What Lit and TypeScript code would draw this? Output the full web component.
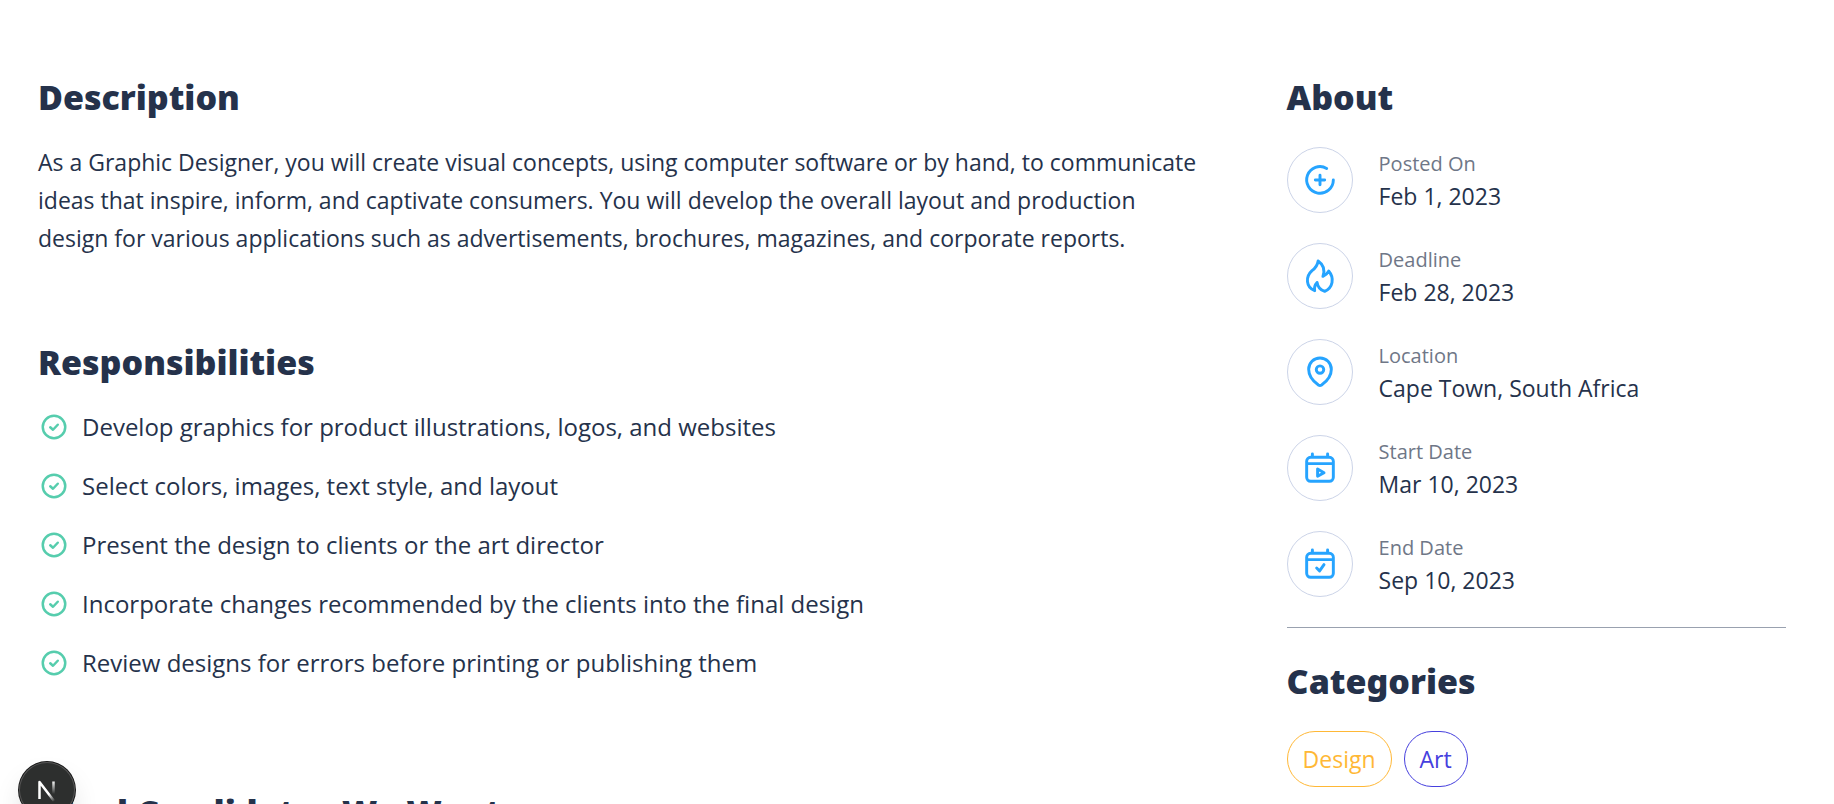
import { LitElement, html, css, svg } from "lit";
import { customElement } from "lit/decorators.js";

const checkIcon = html`<svg class="check" viewBox="0 0 24 24" aria-hidden="true"><circle cx="12" cy="12" r="9"></circle><path d="m9 12.2 2.200 2L15 10.200"></path></svg>`;

const calendar = svg`<path d="M5 4h14a3 3 0 0 1 3 3v12a3 3 0 0 1-3 3H5a3 3 0 0 1-3-3V7a3 3 0 0 1 3-3ZM2 8.700h20M6.300 1.500V4M17.700 1.500V4"></path>`;

const facts = [
  { label: "Posted On", value: "Feb 1, 2023", icon: svg`<path d="M22 12A10 10 0 1 1 17 3.300M12 8.500v7M8.500 12h7"></path>` },
  { label: "Deadline", value: "Feb 28, 2023", icon: svg`<path d="M10.600 .700C14.200 3.200 16 7.300 14.200 12.300 16 11.600 17.500 10.200 18.500 8.300 23 13.500 21.700 20.800 15.500 23.500 12.300 22.500 10.300 20 9.800 16.800 8.200 18.500 7.600 20.700 8 23 1.300 20.500 1 12.500 6 8 8.600 6 10.200 3.700 10.600 .700Z"></path>` },
  { label: "Location", value: "Cape Town, South Africa", icon: svg`<path d="M13.200 21.800a2.200 2.200 0 0 1-2.400 0C6.200 18.600 3.500 14.500 3.500 10a8.500 8.500 0 0 1 17 0c0 4.500-2.700 8.600-7.300 11.800Z"></path><circle cx="12" cy="10.200" r="2.800"></circle>` },
  { label: "Start Date", value: "Mar 10, 2023", icon: svg`${calendar}<path d="M10.200 12.800v5.400l4.800-2.700Z"></path>` },
  { label: "End Date", value: "Sep 10, 2023", icon: svg`${calendar}<path d="m9.500 15 2.200 2.200 3.300-4.700"></path>` },
];

const responsibilities = [
  "Develop graphics for product illustrations, logos, and websites",
  "Select colors, images, text style, and layout",
  "Present the design to clients or the art director",
  "Incorporate changes recommended by the clients into the final design",
  "Review designs for errors before printing or publishing them",
];

@customElement("app-root")
export class AppRoot extends LitElement {
  static styles = css`
    :host { display: block; height: 100vh; overflow: hidden; background: #fff; color: #25324b; font-family: "Segoe UI", "Open Sans", "Noto Sans", sans-serif; }
    * { box-sizing: border-box; }
    .page { display: grid; grid-template-columns: 5fr 2fr; padding: 71px 48px 0 38px; }
    .main { padding-right: 84px; }
    h2 { margin: 0; font-size: 34px; line-height: 52px; font-weight: 900; font-family: "Segoe UI", "Noto Sans", sans-serif; }
    p { margin: 0; }
    .text { margin-top: 20px; font-size: 23px; line-height: 38px; }
    section + section { margin-top: 79px; }
    ul { list-style: none; margin: 9px 0 94px; padding: 0 0 0 1px; }
    li { display: flex; align-items: center; gap: 13px; font-size: 24px; line-height: 59px; }
    svg { display: block; fill: none; stroke: currentColor; stroke-width: 2; stroke-linecap: round; stroke-linejoin: round; overflow: visible; }
    .check { width: 30px; height: 30px; color: #56cdad; flex: none; }
    .facts { display: flex; flex-direction: column; gap: 30px; margin: 24px 0 0; }
    .fact { display: grid; grid-template-columns: 66px 1fr; column-gap: 26px; align-items: center; }
    .ring { width: 66px; height: 66px; border: 1px solid #ccd4e8; border-radius: 50%; color: #26a4ff; display: grid; place-items: center; }
    .ring svg { width: 32px; height: 32px; stroke-width: 2.2; }
    dt { font-size: 20px; line-height: 33px; color: #6f7787; }
    dd { margin: 0; font-size: 23px; line-height: 33px; }
    .categories { margin-top: 30px; padding-top: 27px; border-top: 1px solid #99a1af; }
    .tags { display: flex; gap: 12px; margin-top: 24px; }
    .tag { padding: 0 15px; border: 1px solid currentColor; border-radius: 28px; font-size: 23px; line-height: 54px; }
    .design { color: #ffb836; }
    .art { color: #4640de; }
    .badge { position: fixed; left: 19px; top: calc(100vh - 42px); width: 56px; height: 56px; padding: 0; border: 0; border-radius: 50%; background: #2d2f2e; box-shadow: 0 0 0 1px #171717, inset 0 0 0 1px #555, 0 16px 32px -8px rgba(0,0,0,.24); display: grid; place-items: center; }
    .badge svg { width: 20px; height: 20px; stroke-width: 2.5; }
  `;

  render() {
    return html`
      <div class="page">
        <main class="main">
          <section>
            <h2>Description</h2>
            <p class="text">As a Graphic Designer, you will create visual concepts, using computer software or by hand, to communicate ideas that inspire, inform, and captivate consumers. You will develop the overall layout and production design for various applications such as advertisements, brochures, magazines, and corporate reports.</p>
          </section>
          <section>
            <h2>Responsibilities</h2>
            <ul>${responsibilities.map((r) => html`<li>${checkIcon}<span>${r}</span></li>`)}</ul>
          </section>
          <section><h2>Ideal Candidates We Want</h2></section>
        </main>
        <aside>
          <h2>About</h2>
          <dl class="facts">
            ${facts.map((f) => html`<div class="fact"><span class="ring"><svg viewBox="0 0 24 24" aria-hidden="true">${f.icon}</svg></span><div><dt>${f.label}</dt><dd>${f.value}</dd></div></div>`)}
          </dl>
          <div class="categories">
            <h2>Categories</h2>
            <div class="tags"><span class="tag design">Design</span><span class="tag art">Art</span></div>
          </div>
        </aside>
      </div>
      <button class="badge" aria-label="Open developer tools">
        <svg viewBox="0 0 20 20" aria-hidden="true">
          <defs>
            <linearGradient id="stem" gradientUnits="userSpaceOnUse" x1="0" y1="1" x2="0" y2="14"><stop offset="0" stop-color="#fff"></stop><stop offset="1" stop-color="#fff" stop-opacity="0"></stop></linearGradient>
            <linearGradient id="slash" gradientUnits="userSpaceOnUse" x1="12" y1="14" x2="18" y2="21"><stop offset="0" stop-color="#fff"></stop><stop offset="1" stop-color="#fff" stop-opacity="0"></stop></linearGradient>
          </defs>
          <path d="M16.500 1.500V14" stroke="url(#stem)" stroke-linecap="butt"></path>
          <path d="M2.500 19V2L17 21" stroke="url(#slash)" stroke-linecap="butt"></path>
        </svg>
      </button>
    `;
  }
}
